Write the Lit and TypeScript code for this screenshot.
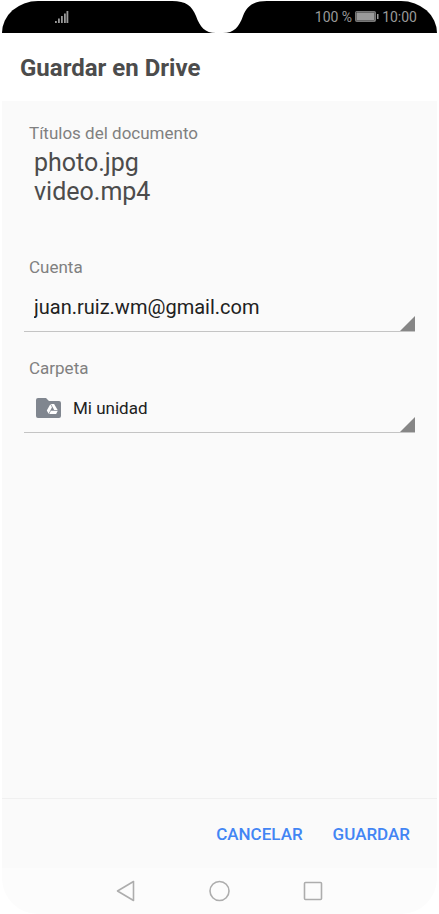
import { LitElement, html, css, svg } from "lit";
import { customElement, property } from "lit/decorators.js";

@customElement("status-bar")
export class StatusBar extends LitElement {
  static styles = css`
    :host {
      display: grid;
      grid-template-columns: 1fr auto 1fr;
      height: 33px;
      box-sizing: border-box;
      padding-top: 1px;
      color: #999;
      font-size: 14px;
      line-height: 32px;
    }
    .side {
      min-width: 0;
      display: flex;
      align-items: center;
      background: #000;
    }
    .left {
      border-top-left-radius: 36px 32px;
      padding-left: 52px;
    }
    .right {
      border-top-right-radius: 36px 32px;
      justify-content: flex-end;
      gap: 3px;
      padding-right: 20px;
      white-space: nowrap;
    }
    .notch {
      display: block;
    }
  `;
  render() {
    return html`
      <div class="side left">
        <svg width="16" height="14" viewBox="0 0 16 14" fill="#999" role="img" aria-label="Señal">
          <path d="M1 11h1.800v2H1zM4 8.500h1.800v4.500H4zM7 6h1.800v7H7zM10 3.500h1.800v9.500H10zM12.500 1h1.800v12h-1.800z" />
        </svg>
      </div>
      <svg class="notch" width="99" height="32" viewBox="0 0 99 32" aria-hidden="true">
        <path d="M0 0H2C16 0 22 5 26 15C30 26 35 32 46 32H0zM99 0H97C83 0 77 5 73 15C69 26 64 32 53 32H99z" />
      </svg>
      <div class="side right">
        <span>100 %</span>
        <svg width="24" height="12" viewBox="0 0 24 12" role="img" aria-label="Batería">
          <rect x="0.500" y="0.500" width="20" height="10" rx="1" fill="#999" stroke="#777" />
          <rect x="1.500" y="1.500" width="18" height="8" fill="none" stroke="#333" stroke-width=".5" />
          <rect x="22" y="3" width="1.500" height="5" fill="#999" />
        </svg>
        <span>10:00</span>
      </div>
    `;
  }
}

@customElement("drop-field")
export class DropField extends LitElement {
  @property() label = "";
  @property() value = "";
  @property({ type: Boolean, reflect: true }) folder = false;

  static styles = css`
    :host {
      display: block;
    }
    label {
      display: block;
      padding-left: 5px;
      font-size: 17px;
      line-height: 24px;
      color: #808080;
    }
    .box {
      position: relative;
      display: flex;
      align-items: center;
      height: 48px;
      padding-top: 4px;
      border-bottom: 1px solid #c4c4c4;
    }
    .box::after {
      content: "";
      position: absolute;
      right: 0;
      bottom: 0;
      width: 15px;
      height: 15px;
      background: #868686;
      clip-path: polygon(100% 0, 100% 100%, 0 100%);
      pointer-events: none;
    }
    .icon {
      flex: none;
      margin: 0 12px;
    }
    select {
      appearance: none;
      flex: 1;
      min-width: 0;
      height: 48px;
      border: 0;
      margin: 0;
      padding: 0 20px 0 10px;
      background: none;
      color: #212121;
      font-family: inherit;
      font-size: 20px;
    }
    :host([folder]) select {
      padding-left: 0;
      font-size: 17px;
    }
  `;
  render() {
    return html`
      <label for="choice">${this.label}</label>
      <div class="box">
        ${this.folder
          ? html`<svg class="icon" width="25" height="20" viewBox="0 0 25 20" aria-hidden="true">
              ${svg`<path fill="#80868f" d="M2 0h8l3 3h10a2 2 0 0 1 2 2v13a2 2 0 0 1-2 2H2a2 2 0 0 1-2-2V2a2 2 0 0 1 2-2z" />
              <g fill="#fff">
                <path d="M14.300 6.300 16 9.300 12.600 15.800 10.800 12.600z" />
                <path d="M14.900 6h3.200l3.500 6h-3.400z" />
                <path d="M14.900 12.800h6.900l-1.700 3.200h-6.900z" />
              </g>`}
            </svg>`
          : null}
        <select id="choice">
          <option>${this.value}</option>
        </select>
      </div>
    `;
  }
}

@customElement("app-root")
export class AppRoot extends LitElement {
  static styles = css`
    :host {
      display: block;
      background: #fff;
      font-family: Roboto, "Liberation Sans", sans-serif;
    }
    .phone {
      display: flex;
      flex-direction: column;
      box-sizing: border-box;
      min-height: 100vh;
      padding: 0 2px;
    }
    header {
      padding: 2px 18px 0;
    }
    h1 {
      margin: 0;
      font-size: 24px;
      font-weight: 700;
      line-height: 66px;
      color: #4c4c4c;
    }
    main {
      flex: 1;
      display: flex;
      flex-direction: column;
      padding: 20px 22px;
      background: #fafafa;
    }
    h2 {
      margin: 0;
      padding-left: 5px;
      font-size: 17px;
      font-weight: 400;
      line-height: 24px;
      color: #808080;
    }
    ul {
      margin: 0 0 49px;
      padding: 3px 10px 0;
      list-style: none;
      font-size: 25px;
      line-height: 29px;
      color: #4c4c4c;
    }
    .folder {
      margin-top: 24px;
    }
    footer {
      display: flex;
      justify-content: flex-end;
      gap: 16px;
      padding: 11px 20px 10px;
      border-top: 1px solid #f0f0f0;
      background: #fafafa;
    }
    .action {
      border: 0;
      padding: 0 7px;
      height: 48px;
      background: none;
      color: #4285f4;
      font-family: inherit;
      font-size: 17px;
      font-weight: 500;
    }
    nav {
      display: flex;
      justify-content: center;
      gap: 46px;
      height: 46px;
      background: #fcfcfc;
      border-radius: 0 0 36px 36px;
    }
    .key {
      display: grid;
      place-items: center;
      width: 48px;
      border: 0;
      padding: 0;
      background: none;
    }
    .key svg {
      fill: none;
      stroke: #adadad;
      stroke-width: 1.6;
      stroke-linejoin: round;
    }
  `;
  render() {
    return html`
      <div class="phone">
        <status-bar></status-bar>
        <header><h1>Guardar en Drive</h1></header>
        <main>
          <h2>Títulos del documento</h2>
          <ul>
            <li>photo.jpg</li>
            <li>video.mp4</li>
          </ul>
          <drop-field label="Cuenta" value="juan.ruiz.wm@gmail.com"></drop-field>
          <drop-field class="folder" folder label="Carpeta" value="Mi unidad"></drop-field>
        </main>
        <footer>
          <button class="action">CANCELAR</button>
          <button class="action">GUARDAR</button>
        </footer>
        <nav aria-label="Sistema">
          <button class="key" aria-label="Atrás">
            <svg width="22" height="22" viewBox="0 0 22 22"><path d="M18.500 1.500v19L2.500 11z" /></svg>
          </button>
          <button class="key" aria-label="Inicio">
            <svg width="22" height="22" viewBox="0 0 22 22"><circle cx="10.500" cy="11" r="9.500" /></svg>
          </button>
          <button class="key" aria-label="Recientes">
            <svg width="22" height="22" viewBox="0 0 22 22"><rect x="1.500" y="2.500" width="17" height="17" rx="1" /></svg>
          </button>
        </nav>
      </div>
    `;
  }
}
